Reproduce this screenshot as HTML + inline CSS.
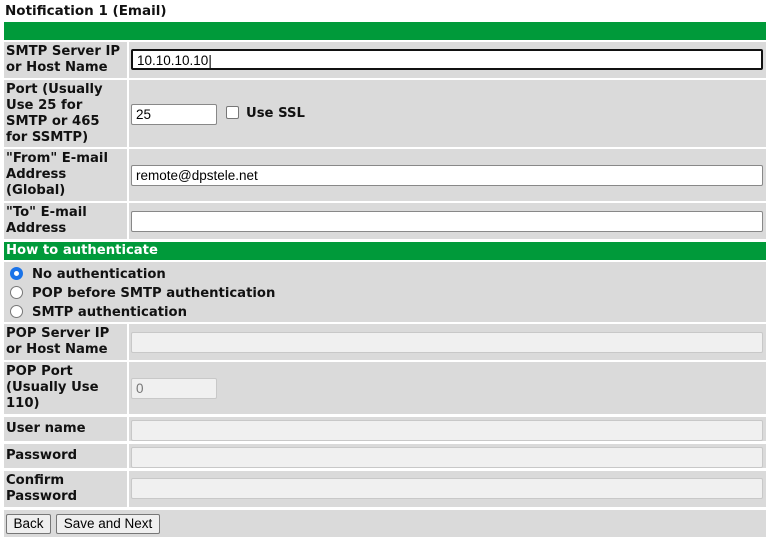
<!DOCTYPE html><html><head><style>
body{margin:0;width:768px;height:539px;background:#fff;position:relative;overflow:hidden;font-family:"DejaVu Sans",Verdana,sans-serif;}
div{position:absolute;box-sizing:border-box}
.l{left:4px;width:123px;background:#dadada;font-weight:bold;font-size:13.2px;line-height:16px;padding:0 2px;display:flex;flex-direction:column;justify-content:center;color:#111;white-space:nowrap}
.v{left:129px;width:637px;background:#dadada}
.g{left:4px;width:762px;background:#009a3a;color:#fff;font-weight:bold;font-size:13.2px;padding-left:2px;line-height:18px}
.i{left:131px;width:632px;height:21px;background:#fff;border:1px solid #888;border-radius:2px;font-family:"Liberation Sans",Arial,sans-serif;font-size:13.5px;padding:2px 4px;line-height:15px}
.d{background:#f0f0f0;border-color:#c8c8c8;color:#777}
.t{font-weight:bold;font-size:13.2px;color:#111;white-space:nowrap}
.r{width:13px;height:13px;border:1px solid #777;border-radius:50%;background:#fff;left:10px}
.b{top:514px;height:20px;background:#efefef;border:1px solid #777;border-radius:2px;font-family:"Liberation Sans",Arial,sans-serif;font-size:13.5px;text-align:center;line-height:17px}
</style></head><body>
<div class="t" style="left:5px;top:3px;font-size:13.5px">Notification 1 (Email)</div>
<div class="g" style="top:22px;height:18px"></div>
<div class="l" style="top:42px;height:36px">SMTP Server IP<br>or Host Name</div><div class="v" style="top:42px;height:36px"></div>
<div class="i" style="top:49px;border:2px solid #111">10.10.10.10|</div>
<div class="l" style="top:80px;height:67px">Port (Usually<br>Use 25 for<br>SMTP or 465<br>for SSMTP)</div><div class="v" style="top:80px;height:67px"></div>
<div class="i" style="top:104px;width:86px">25</div>
<div style="left:226px;top:106px;width:13px;height:13px;border:1px solid #777;border-radius:2px;background:#fff"></div>
<div class="t" style="left:246px;top:106px">Use SSL</div>
<div class="l" style="top:149px;height:52px">"From" E-mail<br>Address<br>(Global)</div><div class="v" style="top:149px;height:52px"></div>
<div class="i" style="top:165px">remote@dpstele.net</div>
<div class="l" style="top:203px;height:36px">"To" E-mail<br>Address</div><div class="v" style="top:203px;height:36px"></div>
<div class="i" style="top:211px"></div>
<div class="g" style="top:242px;height:18px">How to authenticate</div>
<div style="left:4px;top:262px;width:762px;height:60px;background:#dadada"></div>
<div class="r" style="top:267px;border:4px solid #1a73e8"></div><div class="t" style="left:32px;top:267px">No authentication</div>
<div class="r" style="top:286px"></div><div class="t" style="left:32px;top:286px">POP before SMTP authentication</div>
<div class="r" style="top:305px"></div><div class="t" style="left:32px;top:305px">SMTP authentication</div>
<div class="l" style="top:324px;height:36px">POP Server IP<br>or Host Name</div><div class="v" style="top:324px;height:36px"></div>
<div class="i d" style="top:332px"></div>
<div class="l" style="top:362px;height:52px">POP Port<br>(Usually Use<br>110)</div><div class="v" style="top:362px;height:52px"></div>
<div class="i d" style="top:378px;width:86px">0</div>
<div class="l" style="top:417px;height:24px">User name</div><div class="v" style="top:417px;height:24px"></div>
<div class="i d" style="top:420px"></div>
<div class="l" style="top:444px;height:24px">Password</div><div class="v" style="top:444px;height:24px"></div>
<div class="i d" style="top:447px"></div>
<div class="l" style="top:471px;height:36px">Confirm<br>Password</div><div class="v" style="top:471px;height:36px"></div>
<div class="i d" style="top:478px"></div>
<div style="left:4px;top:510px;width:762px;height:27px;background:#dadada"></div>
<div class="b" style="left:6px;width:45px">Back</div>
<div class="b" style="left:56px;width:104px">Save and Next</div>
</body></html>
